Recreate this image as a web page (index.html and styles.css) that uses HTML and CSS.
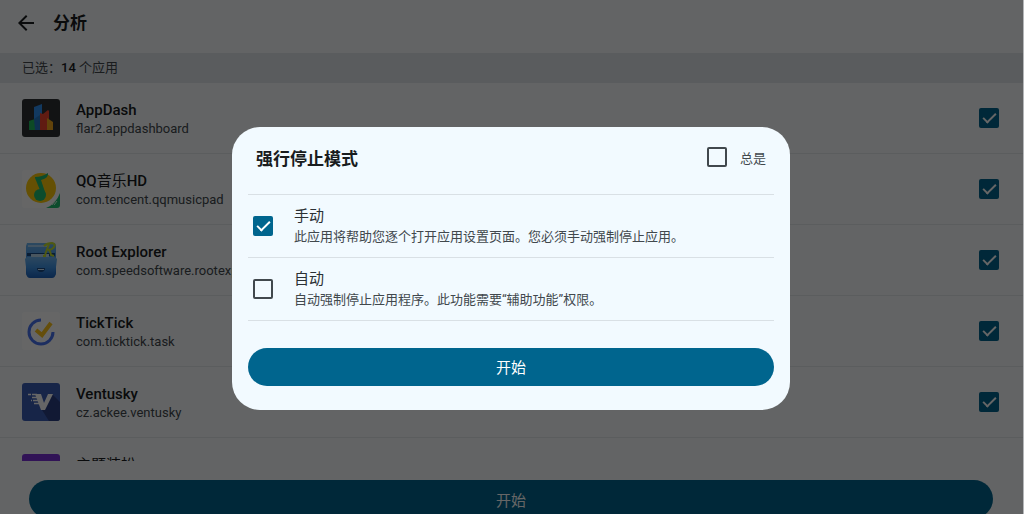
FILE: index.html
```html
<!DOCTYPE html>
<html lang="zh-CN">
<head>
  <meta charset="UTF-8" />
  <meta name="viewport" content="width=device-width, initial-scale=1.0" />
  <title>分析</title>
  <link rel="stylesheet" href="styles.css">
</head>
<body>
  <div class="app">
    <header class="topbar">
      <button class="back" aria-label="返回">
        <svg viewBox="0 0 24 24" width="24" height="24"><path d="M20 11H7.800L13.400 5.400 12 4l-8 8 8 8 1.400-1.400L7.800 13H20z" fill="#191c1e"/></svg>
      </button>
      <h1>分析</h1>
    </header>
    <p class="selected">已选：<b>14</b> 个应用</p>

    <ul class="app-list">
      <li class="app-item">
        <svg class="app-icon" viewBox="0 0 38 38">
          <rect width="38" height="38" rx="3" fill="#2e3033"/>
          <path d="M12 8l8-3v26h-8z" fill="#2d8ff0"/>
          <path d="M7 22l6-2v11H7z" fill="#22b95d"/>
          <path d="M18 14l3 1 5-4 1 1v19h-9z" fill="#f0442f"/>
          <path d="M25 19l6 4v8h-6z" fill="#f5a81c"/>
          <path d="M12 20l6-4v15h-5z" fill="#2478c4"/>
        </svg>
        <label class="app-text" for="app1"><span class="app-name">AppDash</span><span class="app-package">flar2.appdashboard</span></label>
        <input type="checkbox" id="app1" checked>
      </li>
      <li class="app-item">
        <svg class="app-icon" viewBox="0 0 38 38">
          <rect width="38" height="38" rx="3" fill="#fff"/>
          <circle cx="19" cy="18" r="15" fill="#fcc80a"/>
          <path d="M13 7q7 0 13-4 1 5-7 7l5 15h-4L13 8z" fill="#1fbd72"/>
          <circle cx="18" cy="25" r="6" fill="#1fbd72"/>
          <path d="M38 23v12q0 3-3 3H24q10-4 14-15z" fill="#1fbd72"/>
          <path d="M30 35l3-4m-1 4l3-4" stroke="#d5f5e5" fill="none"/>
        </svg>
        <label class="app-text" for="app2"><span class="app-name">QQ<span class="cjk">音乐</span>HD</span><span class="app-package">com.tencent.qqmusicpad</span></label>
        <input type="checkbox" id="app2" checked>
      </li>
      <li class="app-item">
        <svg class="app-icon" viewBox="0 0 38 38">
          <defs>
            <linearGradient id="folder" x1="0" y1="0" x2="0" y2="1">
              <stop offset="0" stop-color="#6fb4ee"/><stop offset=".5" stop-color="#3f93e6"/><stop offset="1" stop-color="#1c62bd"/>
            </linearGradient>
          </defs>
          <path d="M5 2h28l1 3v27q0 4-4 4H8q-4 0-4-4V5z" fill="url(#folder)"/>
          <path d="M6 4h20v2H6z" fill="#a5d0f2"/>
          <path d="M5 12h28v3H5z" fill="#1b4a83"/>
          <path d="M9 13h18v3H9z" fill="#b6d6ee"/>
          <path d="M3 18q1-2 3-2h26q2 0 3 2l-2 16q0 3-3 3H8q-3 0-3-3z" fill="url(#folder)"/>
          <path d="M15 27h8q0 4-4 4t-4-4z" fill="#1b4a83"/>
          <rect x="16" y="28" width="6" height="1" fill="#d7ebf9"/>
          <path d="M22 5q3-3 8-3 4 1 2 4t-6 3q2 0 3 5l3 1M27 3l-4 11m-2 1h3" stroke="#c5df2c" stroke-width="2" fill="none"/>
        </svg>
        <label class="app-text" for="app3"><span class="app-name">Root Explorer</span><span class="app-package">com.speedsoftware.rootexplorer</span></label>
        <input type="checkbox" id="app3" checked>
      </li>
      <li class="app-item">
        <svg class="app-icon" viewBox="0 0 38 38">
          <rect width="38" height="38" rx="3" fill="#fff"/>
          <path d="M19 8a12 12 0 1 0 12 12" stroke="#4a74f0" stroke-width="3" fill="none"/>
          <path d="M14 18l6 5 9-12" stroke="#fcc41c" stroke-width="4" fill="none"/>
        </svg>
        <label class="app-text" for="app4"><span class="app-name">TickTick</span><span class="app-package">com.ticktick.task</span></label>
        <input type="checkbox" id="app4" checked>
      </li>
      <li class="app-item">
        <svg class="app-icon" viewBox="0 0 38 38">
          <rect width="38" height="38" rx="3" fill="#3b5db5"/>
          <path d="M30 11l8 8v16q0 3-3 3H27l-7-11z" fill="#2b3f82"/>
          <path d="M13 11h6l3 9 4-9h5l-8 16h-4z" fill="#fff"/>
          <path d="M6 11.500h3m1 0h5M10 14.500h5M9 17.500h1m1 0h5M12 20.500h6" stroke="#fff" stroke-width="1.500"/>
        </svg>
        <label class="app-text" for="app5"><span class="app-name">Ventusky</span><span class="app-package">cz.ackee.ventusky</span></label>
        <input type="checkbox" id="app5" checked>
      </li>
      <li class="app-item">
        <svg class="app-icon" viewBox="0 0 38 38"><rect width="38" height="38" rx="3" fill="#7a30d8"/></svg>
        <label class="app-text" for="app6"><span class="app-name"><span class="cjk">主题装扮</span></span><span class="app-package"></span></label>
        <input type="checkbox" id="app6" checked>
      </li>
    </ul>

    <footer class="bottom">
      <button class="start">开始</button>
    </footer>
  </div>

  <div class="scrim">
    <form class="dialog" role="dialog" aria-labelledby="dialogTitle">
      <div class="dialog-head">
        <h2 id="dialogTitle">强行停止模式</h2>
        <label class="always"><input type="checkbox"> 总是</label>
      </div>
      <div class="mode">
        <input type="checkbox" id="manual" checked>
        <label for="manual"><span class="mode-name">手动</span><span class="mode-info">此应用将帮助您逐个打开应用设置页面。您必须手动强制停止应用。</span></label>
      </div>
      <div class="mode">
        <input type="checkbox" id="auto">
        <label for="auto"><span class="mode-name">自动</span><span class="mode-info">自动强制停止应用程序。此功能需要“辅助功能”权限。</span></label>
      </div>
      <button type="button" class="start">开始</button>
    </form>
  </div>
</body>
</html>
```

FILE: styles.css
```css
:root {
  --primary: #00658e;
  --bg: #f8fbfd;
  --text: #191c1e;
  --muted: #41484d;
  --dialog: #f2faff;
}

* {
  box-sizing: border-box;
  margin: 0;
  padding: 0;
}

body,
button {
  font-family: Roboto, "Noto Sans CJK SC", sans-serif;
}

body {
  background: #b4b6b8;
  color: var(--text);
  height: 100vh;
  padding-right: 1px;
  overflow: hidden;
}

.app {
  display: flex;
  flex-direction: column;
  height: 100%;
  background: var(--bg);
}

.topbar {
  display: flex;
  align-items: center;
  gap: 15px;
  flex: none;
  height: 53px;
  padding: 0 14px 8px;
}

.back {
  display: flex;
  border: none;
  background: none;
}

h1 {
  font-size: 17px;
  font-weight: 700;
  line-height: 22px;
}

.selected {
  flex: none;
  padding: 0 22px;
  background: #e1e5ea;
  color: var(--muted);
  font-size: 13px;
  line-height: 30px;
}

.selected b {
  color: var(--text);
  font-weight: 500;
}

.app-list {
  flex: 1;
  overflow: hidden;
  list-style: none;
}

.app-item {
  display: flex;
  align-items: center;
  gap: 16px;
  height: 71px;
  padding: 0 24px 0 22px;
  border-bottom: 1px solid #e4e8eb;
}

.app-icon {
  flex: none;
  width: 38px;
  height: 38px;
}

.app-text {
  flex: 1;
  padding-top: 2px;
}

.app-name,
.app-package,
.mode-name,
.mode-info {
  display: block;
}

.app-name {
  font-size: 15px;
  font-weight: 500;
  line-height: 20px;
}

.cjk {
  font-weight: 400;
}

.app-package {
  min-height: 18px;
  color: var(--muted);
  font-size: 13px;
  line-height: 18px;
}

.bottom {
  flex: none;
  height: 53px;
  padding: 19px 30px 0 29px;
}

.start {
  display: block;
  width: 100%;
  height: 38px;
  border: none;
  border-radius: 19px;
  background: var(--primary);
  color: #fff;
  font-size: 15px;
}

input[type="checkbox"] {
  appearance: none;
  flex: none;
  width: 20px;
  height: 20px;
  border: 2px solid var(--muted);
  border-radius: 2px;
}

input[type="checkbox"]:checked {
  border: none;
  background: var(--primary);
}

input[type="checkbox"]:checked::before {
  content: "";
  display: block;
  box-sizing: border-box;
  width: 13px;
  height: 7px;
  margin: 5px 0 0 4px;
  border: solid #fff;
  border-width: 0 0 2px 2px;
  transform: rotate(-45deg);
}

.scrim {
  position: fixed;
  inset: 0 1px 0 0;
  display: flex;
  align-items: center;
  justify-content: center;
  padding: 22px 1px 0 0;
  background: rgba(0, 0, 0, 0.6);
}

.dialog {
  width: 558px;
  max-width: 90%;
  padding: 0 16px 24px;
  border-radius: 28px;
  background: var(--dialog);
}

.dialog-head {
  display: flex;
  align-items: center;
  justify-content: space-between;
  height: 67px;
  padding: 0 8px 6px;
}

h2 {
  font-size: 17px;
  font-weight: 700;
}

.always {
  display: flex;
  align-items: center;
  gap: 13px;
  color: var(--muted);
  font-size: 13px;
}

.mode {
  display: flex;
  align-items: center;
  gap: 21px;
  height: 63px;
  padding: 0 5px;
  border-top: 1px solid #d9e0e5;
  color: var(--muted);
}

.mode-name {
  color: #2b3034;
  font-size: 15px;
  line-height: 22px;
}

.mode-info {
  font-size: 13px;
  line-height: 20px;
}

.mode + .mode {
  height: 64px;
  margin-bottom: 27px;
  border-bottom: 1px solid #d9e0e5;
}
```
